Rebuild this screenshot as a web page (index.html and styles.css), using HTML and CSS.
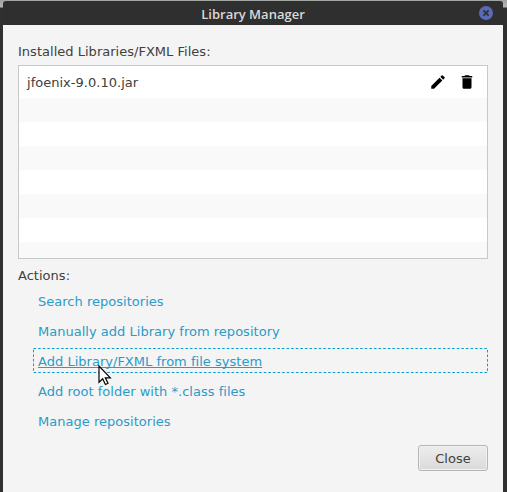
FILE: index.html
```html
<!DOCTYPE html>
<html lang="en">
<head>
<meta charset="utf-8">
<title>Library Manager</title>
<link rel="stylesheet" href="styles.css">
</head>
<body>
<div class="window">
  <header class="titlebar">
    <span class="title">Library Manager</span>
    <svg class="window-close" width="14" height="14" viewBox="0 0 14 14"><circle cx="7" cy="7" r="7" fill="#596ab8"/><path d="M4.400 4.400l5.200 5.200M9.600 4.400L4.400 9.600" stroke="#2f2f2f" stroke-width="1.600"/></svg>
  </header>
  <main class="content">
    <div class="label">Installed Libraries/FXML Files:</div>
    <div class="list">
      <div class="row item">
        <span class="name">jfoenix-9.0.10.jar</span>
        <svg class="icon" width="18" height="18" viewBox="0 0 24 24"><path d="M3 17.250V21h3.750L17.810 9.940l-3.750-3.750L3 17.250zM20.710 7.040a1 1 0 0 0 0-1.410l-2.340-2.340a1 1 0 0 0-1.410 0l-1.830 1.830 3.750 3.750 1.830-1.830z"/></svg>
        <svg class="icon" width="18" height="18" viewBox="0 0 24 24"><path d="M6 19a2 2 0 0 0 2 2h8a2 2 0 0 0 2-2V7H6v12zM19 4h-3.500l-1-1h-5l-1 1H5v2h14V4z"/></svg>
      </div>
      <div class="row"></div>
      <div class="row"></div>
      <div class="row"></div>
      <div class="row"></div>
      <div class="row"></div>
      <div class="row"></div>
      <div class="row"></div>
    </div>
    <div class="label actions-label">Actions:</div>
    <nav class="actions">
      <a class="link">Search repositories</a>
      <a class="link">Manually add Library from repository</a>
      <a class="link focused"><span>Add Library/FXML from file system</span>
        <svg class="focus-ring" width="455" height="25"><rect x=".5" y=".5" width="454" height="24"/></svg>
        <svg class="cursor" width="14" height="21" viewBox="0 0 14 21"><path d="M1 1v16.300l3.700-3.500 2.700 5.700 2.600-1.200-2.700-5.500h5z"/></svg>
      </a>
      <a class="link">Add root folder with *.class files</a>
      <a class="link">Manage repositories</a>
    </nav>
    <div class="footer"><button class="button">Close</button></div>
  </main>
</div>
</body>
</html>
```
FILE: styles.css
```css
* { box-sizing: border-box; }
body {
  margin: 0;
  height: 492px;
  overflow: hidden;
  padding: 1px 4px 0 3px;
  background: linear-gradient(#a0a3a0 0, #b5b5b5 7px, #303030 8px, #303030 100%);
  font: 13px/16px "DejaVu Sans", sans-serif;
  letter-spacing: .02px;
  color: #404040;
}
.window {
  height: 491px;
  display: flex;
  flex-direction: column;
}
.titlebar {
  height: 24px;
  flex: none;
  display: grid;
  grid-template-columns: 1fr auto 1fr;
  align-items: center;
  padding: 0 10px;
  background: #2f2f2f;
  border-radius: 3px 3px 0 0;
}
.title {
  grid-column: 2;
  padding-top: 1px;
  font: 600 13px/16px "Open Sans", sans-serif;
  letter-spacing: 0;
  color: #d9d9d9;
}
.window-close { justify-self: end; }
.content {
  flex: 1;
  padding: 19px 15px 0;
  background: #f4f4f4;
}
.label { height: 16px; }
.list {
  height: 194px;
  margin-top: 5px;
  border: 1px solid #c8c8c8;
  overflow: hidden;
  background: #fff;
}
.row { height: 24px; }
.row:nth-child(even) { background: #f9f9f9; }
.item {
  height: 32px;
  display: flex;
  align-items: center;
  gap: 11px;
  padding: 0 11px 0 8px;
}
.name { flex: 1; padding-top: 2px; }
.actions-label { margin-top: 9px; }
.actions {
  display: flex;
  flex-direction: column;
  gap: 5px;
  margin: 4px 0 0 15px;
}
.link {
  height: 25px;
  padding: 6px 5px 0;
  color: #2a9bc9;
}
.focused { position: relative; }
.focused span {
  text-decoration: underline;
  text-decoration-thickness: 1px;
  text-underline-offset: 1px;
  text-decoration-skip-ink: none;
}
.focus-ring { position: absolute; left: 0; top: 0; }
.focus-ring rect {
  fill: none;
  stroke: #0c9bd0;
  stroke-dasharray: 2.600 2;
}
.cursor { position: absolute; left: 65px; top: 17px; }
.cursor path { fill: #fff; stroke: #000; stroke-width: 1.200; }
.footer {
  display: flex;
  justify-content: flex-end;
  margin-top: 12px;
}
.button {
  width: 70px;
  height: 26px;
  padding: 2px 0 0;
  border: 1px solid #b5b5b5;
  border-radius: 3px;
  background: linear-gradient(#ededed, #dadada);
  box-shadow: inset 0 0 0 1px #f1f1f1;
  font: inherit;
  color: #404040;
}
```
